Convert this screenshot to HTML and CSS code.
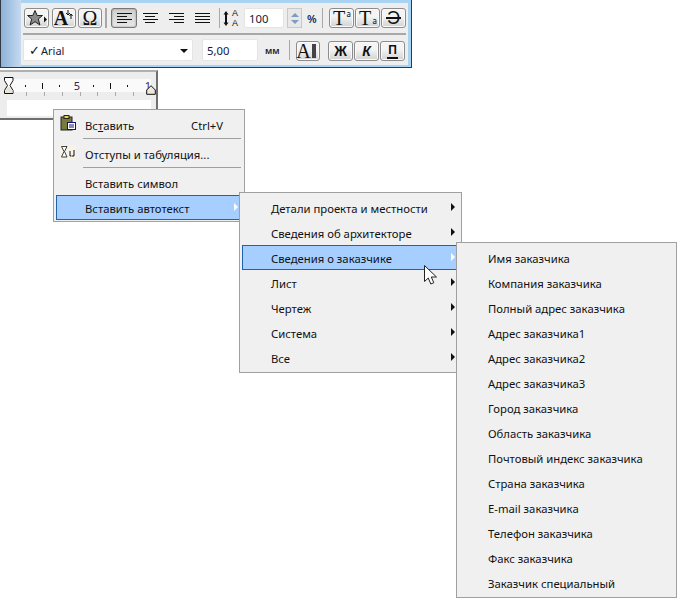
FILE: index.html
```html
<!DOCTYPE html>
<html lang="ru">
<head>
<meta charset="utf-8">
<title>Меню автотекста</title>
<link rel="stylesheet" href="styles.css">
</head>
<body>
<div class="toolbar">
  <div class="tb-grip"></div>
  <div class="tb-panel">
    <div class="tb-row tb-row1">
      <button class="btn btn-star"><svg width="22" height="18" viewBox="0 0 22 18"><path d="M9 1.500l2.200 5h5.300l-4.200 3.500 1.600 6-4.900-3.300-4.900 3.300 1.600-6L1.500 6.500h5.300z" fill="#8a8a8a" stroke="#222"/><path d="M18 7.500v6l3-3z" fill="#111"/></svg></button>
      <button class="btn btn-a"><span class="serif-big">A</span><svg class="a-mark" width="9" height="13" viewBox="0 0 9 13"><path d="M3 0v5M1 3l2 2 2-2M6 4v5M4.500 6L6 4l1.500 2" fill="none" stroke="#111"/></svg></button>
      <button class="btn btn-om"><span class="serif-big">Ω</span></button>
      <i class="vsep vsep-a"></i>
      <button class="btn btn-al active"><span class="lines l-left"><b></b><b></b><b></b><b></b></span></button>
      <button class="btn-plain"><span class="lines l-center"><b></b><b></b><b></b><b></b></span></button>
      <button class="btn-plain"><span class="lines l-right"><b></b><b></b><b></b><b></b></span></button>
      <button class="btn-plain"><span class="lines l-just"><b></b><b></b><b></b><b></b></span></button>
      <i class="vsep vsep-b"></i>
      <span class="spacing"><svg width="6" height="15" viewBox="0 0 6 15"><path d="M3 0l2.500 3.500h-1.500v8h1.500L3 15 .5 11.500h1.500v-8H.5z" fill="#111"/></svg><span class="sp-dots"><span>A</span><span>A</span></span></span>
      <span class="field field-pct">100</span>
      <span class="spin"><i class="sp-up"></i><i class="sp-down"></i></span>
      <span class="pct">%</span>
      <i class="vsep vsep-c"></i>
      <button class="btn btn-t"><span class="serif-big">T</span><span class="mini mini-up">а</span></button>
      <button class="btn btn-t"><span class="serif-big">T</span><span class="mini mini-down">а</span></button>
      <button class="btn btn-t"><span class="strike">Э</span></button>
    </div>
    <div class="tb-div"></div>
    <div class="tb-row tb-row2">
      <div class="field field-font"><span class="check">✓</span><span class="fname">Arial</span><i class="caret"></i></div>
      <span class="field field-size">5,00</span>
      <span class="unit">мм</span>
      <i class="vsep vsep-d"></i>
      <button class="btn btn-col btn-low"><span class="serif-big">A</span><i class="colbar"></i></button>
      <button class="btn btn-f btn-low"><b class="fb">Ж</b></button>
      <button class="btn btn-f btn-low"><b class="fi">К</b></button>
      <button class="btn btn-f btn-low"><b class="fu">П</b></button>
    </div>
  </div>
</div>

<div class="ruler">
  <div class="r-band">
    <i class="d"></i><i class="l"></i><i class="d"></i><span class="rn">5</span><i class="d"></i><i class="l"></i><i class="d"></i><span class="rn rn-1">1</span>
  </div>
  <div class="r-ticks"><i></i><i></i><i></i><i></i><i></i><i></i><i></i></div>
  <div class="r-box"></div>
  <svg class="r-glass" width="10" height="17" viewBox="0 0 10 17"><path d="M.5.500h8.500v3L6 8.500l3 5v3H.5v-3l3-5-3-5z" fill="#fff" stroke="#111"/><path d="M1 13.500L4.700 9.500l3.800 4v2.500H1z" fill="#e8e4d8"/></svg>
  <svg class="r-tri" width="10" height="10" viewBox="0 0 10 10"><path d="M5 .7l4.300 4.300v4.300H.7V5z" fill="#eee8d8" stroke="#111"/></svg>
</div>

<div class="menu m1">
  <div class="item"><svg class="mi" width="16" height="16" viewBox="0 0 16 16"><rect x="1" y="2" width="11" height="13" fill="#7a7a3c" stroke="#222"/><rect x="4" y="0.500" width="5" height="3" fill="#e8d050" stroke="#222"/><rect x="7.500" y="7.500" width="8" height="7" fill="#fff" stroke="#12127a"/><path d="M9 10h5M9 12h5" stroke="#12127a"/></svg><span class="t">Вс<u>т</u>авить</span><span class="k">Ctrl+V</span></div>
  <div class="sep"></div>
  <div class="item"><svg class="mi mi-tab" width="16" height="15" viewBox="0 0 16 15"><rect width="16" height="15" fill="#f6f4e6"/><path d="M1.500 1.500h5.500L4.500 6.500 7 12H1.500L4 6.500z" fill="#fff" stroke="#111" stroke-width=".8"/><path d="M10 6v5h1.500M14 5v6h-2" fill="none" stroke="#111"/></svg><span class="t">Отступы и табуляция...</span></div>
  <div class="sep"></div>
  <div class="item"><span class="t">Вставить символ</span></div>
  <div class="item sel"><span class="t">Вставить автотекст</span><i class="arr"></i></div>
</div>

<div class="menu m2">
  <div class="item"><span class="t">Детали проекта и местности</span><i class="arr"></i></div>
  <div class="item"><span class="t">Сведения об архитекторе</span><i class="arr"></i></div>
  <div class="item sel"><span class="t">Сведения о заказчике</span><i class="arr"></i></div>
  <div class="item"><span class="t">Лист</span><i class="arr"></i></div>
  <div class="item"><span class="t">Чертеж</span><i class="arr"></i></div>
  <div class="item"><span class="t">Система</span><i class="arr"></i></div>
  <div class="item"><span class="t">Все</span><i class="arr"></i></div>
</div>

<div class="menu m3">
  <div class="item"><span class="t">Имя заказчика</span></div>
  <div class="item"><span class="t">Компания заказчика</span></div>
  <div class="item"><span class="t">Полный адрес заказчика</span></div>
  <div class="item"><span class="t">Адрес заказчика1</span></div>
  <div class="item"><span class="t">Адрес заказчика2</span></div>
  <div class="item"><span class="t">Адрес заказчика3</span></div>
  <div class="item"><span class="t">Город заказчика</span></div>
  <div class="item"><span class="t">Область заказчика</span></div>
  <div class="item"><span class="t">Почтовый индекс заказчика</span></div>
  <div class="item"><span class="t">Страна заказчика</span></div>
  <div class="item"><span class="t">E-mail заказчика</span></div>
  <div class="item"><span class="t">Телефон заказчика</span></div>
  <div class="item"><span class="t">Факс заказчика</span></div>
  <div class="item"><span class="t">Заказчик специальный</span></div>
</div>

<svg class="cursor" width="14" height="21" viewBox="0 0 14 21"><path d="M.5.500v16l3.800-3.500 2.500 6 3-1.300-2.500-5.700h5.200z" fill="#fff" stroke="#222"/></svg>
</body>
</html>
```
FILE: styles.css
```css
* { box-sizing: border-box; }
html, body { margin: 0; padding: 0; background: #fff; }
body {
  width: 677px; height: 598px; position: relative; overflow: hidden;
  font-family: "Noto Sans", "Open Sans", sans-serif; font-size: 11.300px; color: #111;
}
button { margin: 0; padding: 0; font: inherit; color: inherit; }
i { display: block; font-style: normal; }

/* toolbar */
.toolbar {
  width: 412px; height: 68px; display: flex;
  background: #a9d3f2;
  border: 1px solid #2f3a44; border-width: 0 1px 1px 1px;
  padding: 3px 3px 2px 0;
}
.tb-grip { width: 20px; margin-top: -3px; margin-bottom: -2px; background: linear-gradient(90deg, #8db2d9, #c6daf0); }
.tb-panel { width: 387px; background: #eeeeee; padding: 5px 0 0 3px; }
.tb-row { display: flex; align-items: center; }
.tb-row1 { height: 20px; }
.tb-div { height: 2px; margin: 5px 2px 0 -1px; background: #a8a8a8; width: 383px; }
.tb-row2 { height: 22px; margin-top: 4px; }

.btn {
  width: 25px; height: 20px; margin-right: 1px;
  border: 1px solid #8c8c8c; border-radius: 3px;
  background: linear-gradient(#f4f4f4 40%, #d2d2d2);
  box-shadow: inset 0 0 0 1px #fafafa;
  display: flex; align-items: center; justify-content: center; position: relative;
  flex: none;
}
.btn-low { position: relative; top: 1px; }
.btn-plain { width: 26px; height: 20px; background: none; border: 0; display: flex; align-items: center; justify-content: center; flex: none; }
.active { width: 26px; background: linear-gradient(#cfcfcf, #e8e8e8); border-color: #777; box-shadow: inset 0 0 2px #888; margin-right: 0; }
.btn-star { margin-right: 3px; }
.btn-a { width: 24px; margin-right: 2px; }
.btn-om { width: 24px; }
.serif-big { font-family: "Liberation Serif", serif; font-size: 20px; line-height: 18px; height: 18px; color: #111; }
.btn-a .serif-big { margin-left: -6px; font-weight: bold; }
.a-mark { position: absolute; right: 1px; top: 1px; }

.vsep { width: 2px; height: 20px; background: #a8a8a8; flex: none; }
.vsep-a { margin: 0 4px 0 2px; }
.vsep-b { width: 1px; margin: 0 3px 0 4px; }
.vsep-c { width: 1px; margin: 0 6px 0 3px; }
.vsep-d { width: 1px; margin: 0 6px 0 10px; }

.lines { display: flex; flex-direction: column; gap: 2px; width: 15px; }
.lines b { display: block; height: 1px; background: #111; }
.l-left b:nth-child(even) { width: 10px; }
.l-center { align-items: center; } .l-center b:nth-child(odd) { width: 15px; } .l-center b:nth-child(even) { width: 10px; }
.l-right { align-items: flex-end; } .l-right b:nth-child(odd) { width: 15px; } .l-right b:nth-child(even) { width: 10px; }

.spacing { display: flex; align-items: center; width: 17px; margin-right: 4px; }
.sp-dots { display: flex; flex-direction: column; font-family: "Liberation Sans", sans-serif; font-size: 9px; line-height: 10px; margin-left: 3px; }
.field { background: #fff; border-radius: 2px; border: 1px solid #e4e4e4; display: flex; align-items: center; color: #111a3a; flex: none; }
.field-pct { width: 40px; height: 20px; padding-left: 4px; margin-right: 3px; }
.spin { width: 15px; height: 20px; border: 1px solid #c8c8c8; background: #e8e8e8; display: flex; flex-direction: column; align-items: center; justify-content: space-around; padding: 2px 0; flex: none; }
.sp-up { width: 0; height: 0; border: 4px solid transparent; border-top: 0; border-bottom: 4px solid #7d9cc4; }
.sp-down { width: 0; height: 0; border: 4px solid transparent; border-bottom: 0; border-top: 4px solid #7d9cc4; }
.pct { width: 12px; margin-left: 5px; font-size: 11px; font-weight: 600; color: #1a2a50; }
.btn-t .serif-big { margin-left: -5px; }
.mini { font-size: 8px; line-height: 8px; position: absolute; right: 2px; }
.mini-up { top: 1px; }
.mini-down { bottom: 2px; }
.strike { font-family: "Liberation Sans", sans-serif; font-size: 18px; line-height: 18px; height: 18px; }
.strike::after { content: ""; position: absolute; left: 4px; right: 4px; top: 8px; height: 2px; background: #111; }

.field-font { width: 170px; height: 22px; padding-left: 5px; position: relative; margin-left: -1px; }
.check { width: 12px; font-size: 13px; color: #111; }
.fname { font-size: 11px; }
.caret { position: absolute; right: 4px; top: 9px; width: 0; height: 0; border: 4px solid transparent; border-bottom: 0; border-top: 4px solid #111; }
.field-size { width: 56px; height: 22px; margin-left: 9px; padding-left: 4px; }
.unit { width: 14px; margin-left: 7px; font-size: 9px; color: #223; font-weight: 600; }
.btn-col { width: 24px; margin-right: 8px; }
.btn-col .serif-big { margin-left: -4px; }
.colbar { width: 4px; height: 14px; background: #444; margin-left: 1px; }
.btn-f { width: 25px; }
.fb { font-family: "Liberation Sans", sans-serif; font-size: 14px; line-height: 14px; }
.fi { font-family: "Liberation Sans", sans-serif; font-size: 14px; line-height: 14px; font-style: italic; }
.fu { font-family: "Liberation Sans", sans-serif; font-size: 12px; line-height: 13px; padding: 0 1px; border-bottom: 2px solid #111; }

/* ruler */
.ruler {
  width: 158px; height: 50px; margin-top: 2px; position: relative;
  background: #ededed;
  border-top: 2px solid #b0b0b0; border-right: 2px solid #6f6f6f; border-bottom: 2px solid #6f6f6f;
  padding: 7px 5px 0 7px;
}
.r-band { height: 13px; background: #fafafa; display: flex; align-items: center; padding-left: 18px; }
.r-band .d { width: 1px; height: 2px; background: #111; margin-right: 17px; }
.r-band .l { width: 1px; height: 6px; background: #111; margin-right: 17px; }
.rn { width: 7px; margin: 0 13px 0 -3px; font-size: 11px; line-height: 13px; color: #2a2a40; }
.rn-1 { margin: 0; color: #3a2a60; }
.r-ticks { height: 4px; display: flex; padding-left: 19px; }
.r-ticks i { width: 1px; height: 4px; background: #aaa; margin-right: 17px; }
.r-box { height: 16px; background: #fff; margin-top: 4px; }
.r-glass { position: absolute; left: 4px; top: 5px; }
.r-tri { position: absolute; left: 146px; top: 13px; }

/* menus */
.menu { position: absolute; background: #f0f0f0; border: 1px solid #a0a0a0; padding: 2px; }
.m1 { left: 53px; top: 109px; width: 192px; height: 113px; }
.m2 { left: 239px; top: 192px; width: 223px; height: 181px; }
.m3 { left: 456px; top: 242px; width: 221px; height: 356px; }
.item { height: 25px; display: flex; align-items: center; position: relative; border: 1px solid transparent; white-space: nowrap; padding-left: 28px; }
.sel { background: #a6cfff; border-color: #1f62b0; }
.t { position: relative; top: 1px; }
.mi { position: absolute; left: 3px; top: 2px; }
.mi-tab { top: 3px; }
.k { position: absolute; left: 134px; top: 5px; }
.sep { height: 4px; margin: 0 1px 0 27px; padding-top: 1px; }
.sep::before { content: ""; display: block; height: 1px; background: #a0a0a0; }
.arr { position: absolute; right: 3px; top: 7px; width: 0; height: 0; border: 4px solid transparent; border-right: 0; border-left: 4px solid #111; }
.sel .arr { border-left-color: #fff; }
.cursor { position: absolute; left: 424px; top: 265px; }
```
